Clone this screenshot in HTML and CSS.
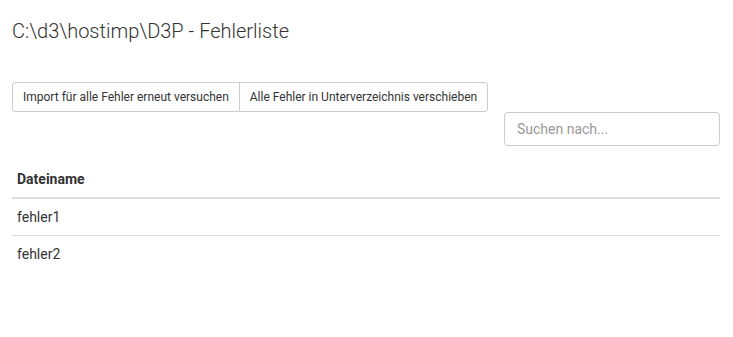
FILE: index.html
```html
<!DOCTYPE html>
<html lang="de">
<head>
<meta charset="utf-8">
<title>Fehlerliste</title>
<link rel="stylesheet" href="styles.css">
</head>
<body>
<div class="page">
  <h1 class="title">C:\d3\hostimp\D3P - Fehlerliste</h1>
  <div class="toolbar">
    <div class="btn-group">
      <button class="btn" type="button">Import für alle Fehler erneut versuchen</button>
      <button class="btn" type="button">Alle Fehler in Unterverzeichnis verschieben</button>
    </div>
  </div>
  <div class="search-row">
    <input class="search" type="text" placeholder="Suchen nach...">
  </div>
  <table class="table">
    <thead>
      <tr><th>Dateiname</th></tr>
    </thead>
    <tbody>
      <tr><td>fehler1</td></tr>
      <tr><td>fehler2</td></tr>
    </tbody>
  </table>
</div>
</body>
</html>
```
FILE: styles.css
```css
html, body {
  margin: 0;
  padding: 0;
  background: #fff;
}
body {
  font-family: Roboto, "Liberation Sans", sans-serif;
  font-size: 14px;
  line-height: 20px;
  color: #333;
}
.page {
  padding: 0 13px 0 12px;
}
.title {
  margin: 0;
  padding-top: 19px;
  font-size: 20px;
  font-weight: 300;
  line-height: 24px;
  color: #333;
}
.toolbar {
  margin-top: 39px;
  display: flex;
}
.btn-group {
  display: flex;
}
.btn {
  font-family: Roboto, "Liberation Sans", sans-serif;
  font-size: 12px;
  line-height: 18px;
  color: #333;
  background: #fff;
  border: 1px solid #ccc;
  padding: 5px 10px;
  margin: 0;
  cursor: pointer;
}
.btn:first-child {
  border-radius: 3px 0 0 3px;
}
.btn + .btn {
  margin-left: -1px;
  border-radius: 0 3px 3px 0;
}
.search-row {
  display: flex;
  justify-content: flex-end;
}
.search {
  width: 216px;
  height: 34px;
  box-sizing: border-box;
  padding: 6px 12px;
  font-family: Roboto, "Liberation Sans", sans-serif;
  font-size: 14px;
  color: #555;
  border: 1px solid #ccc;
  border-radius: 4px;
  outline: none;
}
.search::placeholder {
  color: #999;
}
.table {
  width: 100%;
  border-collapse: collapse;
  margin-top: 15px;
}
.table th,
.table td {
  text-align: left;
  padding: 8px 5px;
  line-height: 20px;
  font-size: 14px;
}
.table th {
  font-weight: 700;
  border-bottom: 2px solid #ddd;
}
.table tbody tr + tr td {
  border-top: 1px solid #ddd;
}
```
